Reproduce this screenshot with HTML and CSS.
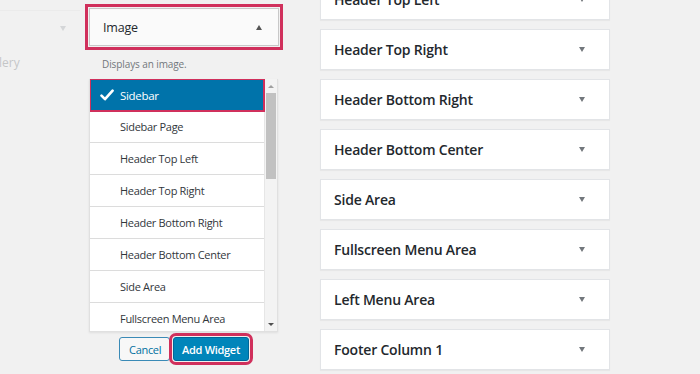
FILE: index.html
```html
<!DOCTYPE html>
<html lang="en">
<head>
    <meta charset="UTF-8">
    <meta name="viewport" content="width=device-width, initial-scale=1.0">
    <title>Widgets</title>
    <link rel="stylesheet" href="styles.css">
</head>
<body>
    <div class="screen">
        <!-- faded widget on the left -->
        <div class="ghost">
            <div class="ghost-title">
                <span class="arrow-down faint"></span>
            </div>
            <div class="ghost-desc">llery</div>
        </div>

        <!-- widget being added -->
        <div class="chooser">
            <div class="widget-top focus">
                <span>Image</span>
                <span class="arrow-up"></span>
            </div>
            <p class="widget-desc">Displays an image.</p>

            <div class="area-list">
                <ul class="areas">
                    <li class="area selected">
                        <svg class="check" width="14" height="14" viewBox="0 0 14 14">
                            <path d="M1.5 7.6 L5 11.2 L12.6 2.6" fill="none" stroke="#fff" stroke-width="2.6" stroke-linecap="round" stroke-linejoin="round"/>
                        </svg>
                        Sidebar
                    </li>
                    <li class="area">Sidebar Page</li>
                    <li class="area">Header Top Left</li>
                    <li class="area">Header Top Right</li>
                    <li class="area">Header Bottom Right</li>
                    <li class="area">Header Bottom Center</li>
                    <li class="area">Side Area</li>
                    <li class="area">Fullscreen Menu Area</li>
                </ul>
                <div class="scrollbar">
                    <span class="sb-up"></span>
                    <div class="sb-track"><div class="sb-thumb"></div></div>
                    <span class="sb-down"></span>
                </div>
            </div>

            <div class="actions">
                <button class="btn btn-cancel">Cancel</button>
                <button class="btn btn-primary focus">Add Widget</button>
            </div>
        </div>

        <!-- sidebars -->
        <div class="sidebars">
            <div class="sidebar-box"><h2>Header Top Left</h2><span class="arrow-down"></span></div>
            <div class="sidebar-box"><h2>Header Top Right</h2><span class="arrow-down"></span></div>
            <div class="sidebar-box"><h2>Header Bottom Right</h2><span class="arrow-down"></span></div>
            <div class="sidebar-box"><h2>Header Bottom Center</h2><span class="arrow-down"></span></div>
            <div class="sidebar-box"><h2>Side Area</h2><span class="arrow-down"></span></div>
            <div class="sidebar-box"><h2>Fullscreen Menu Area</h2><span class="arrow-down"></span></div>
            <div class="sidebar-box"><h2>Left Menu Area</h2><span class="arrow-down"></span></div>
            <div class="sidebar-box"><h2>Footer Column 1</h2><span class="arrow-down"></span></div>
        </div>
    </div>
</body>
</html>
```

FILE: styles.css
```css
:root {
    --bg: #f1f1f1;
    --border: #dcdcde;
    --text: #23282d;
    --muted: #72777c;
    --blue: #0073aa;
    --highlight: #d0305c;
}

* {
    box-sizing: border-box;
    margin: 0;
    padding: 0;
}

body {
    background: var(--bg);
    color: var(--text);
    font-family: 'Open Sans', 'Noto Sans', Arial, sans-serif;
    width: 700px;
    height: 374px;
    overflow: hidden;
}

.screen {
    display: flex;
    align-items: flex-start;
}

/* faded widget on the left edge */
.ghost {
    width: 80px;
    margin-top: 10px;
    opacity: 0.35;
}

.ghost-title {
    height: 36px;
    border-top: 1px solid #e2e2e2;
    display: flex;
    align-items: center;
    justify-content: flex-end;
    padding-right: 14px;
}

.ghost-desc {
    font-size: 12px;
    color: var(--muted);
    margin-top: 8px;
    margin-left: -4px;
}

/* chooser column */
.chooser {
    width: 190px;
    margin-left: 9px;
    margin-top: 8px;
}

.widget-top {
    height: 38px;
    background: #fafafa;
    border: 1px solid #c8c8c8;
    display: flex;
    align-items: center;
    justify-content: space-between;
    padding: 0 16px 0 13px;
    font-size: 12.5px;
    letter-spacing: -0.2px;
    color: var(--text);
}

.focus {
    outline: 3px solid var(--highlight);
    outline-offset: 1px;
}

.widget-desc {
    font-size: 10px;
    letter-spacing: -0.1px;
    color: var(--muted);
    padding: 11px 0 0 13px;
    height: 33px;
}

.area-list {
    display: flex;
    width: 189px;
    height: 253px;
    background: #fff;
    border: 1px solid #e0e0e0;
    border-top: none;
    box-shadow: 0 1px 2px rgba(0, 0, 0, 0.08);
    overflow: hidden;
}

.areas {
    list-style: none;
    flex: 1;
}

.area {
    height: 32px;
    border-bottom: 1px solid #dcdcdc;
    display: flex;
    align-items: center;
    padding-left: 30px;
    font-size: 11px;
    letter-spacing: -0.3px;
    color: #32373c;
}

.area.selected {
    background: var(--blue);
    color: #fff;
    padding-left: 10px;
    gap: 6px;
    border-bottom: none;
    outline: 2px solid var(--highlight);
    outline-offset: -1px;
    position: relative;
    font-size: 11.5px;
}

.scrollbar {
    width: 13px;
    background: #f3f3f3;
    border-left: 1px solid #e6e6e6;
    display: flex;
    flex-direction: column;
    align-items: center;
}

.sb-up,
.sb-down {
    height: 14px;
    display: flex;
    align-items: center;
}

.sb-up::before {
    content: '';
    border: 3px solid transparent;
    border-bottom: 3px solid #a0a0a0;
    border-top: none;
}

.sb-down::before {
    content: '';
    border: 3px solid transparent;
    border-top: 3px solid #505050;
    border-bottom: none;
}

.sb-track {
    flex: 1;
    width: 100%;
    padding: 0 1px;
}

.sb-thumb {
    height: 86px;
    background: #c1c1c1;
}

.actions {
    display: flex;
    gap: 3px;
    margin: 5px 0 0 30px;
}

.btn {
    font-family: inherit;
    font-size: 11px;
    letter-spacing: -0.3px;
    height: 24px;
    border-radius: 3px;
    padding: 0 9px;
    cursor: pointer;
}

.btn-cancel {
    width: 51px;
    background: #f7f7f7;
    border: 1px solid #3a8ab6;
    color: #0071a1;
}

.btn-primary {
    width: 76px;
    background: #0085ba;
    border: 1px solid #006799;
    color: #fff;
    font-weight: 600;
    padding: 0;
}

/* sidebar boxes */
.sidebars {
    width: 290px;
    margin-left: 41px;
    margin-top: -21px;
    display: flex;
    flex-direction: column;
    gap: 9px;
}

.sidebar-box {
    height: 41px;
    background: #fff;
    border: 1px solid #e2e4e7;
    box-shadow: 0 1px 1px rgba(0, 0, 0, 0.04);
    display: flex;
    align-items: center;
    justify-content: space-between;
    padding: 0 24px 0 13px;
}

.sidebar-box h2 {
    font-size: 14px;
    letter-spacing: -0.2px;
    font-weight: 600;
    color: var(--text);
}

.arrow-down {
    width: 0;
    height: 0;
    border-left: 3.5px solid transparent;
    border-right: 3.5px solid transparent;
    border-top: 5px solid #72777c;
}

.arrow-down.faint {
    border-top-color: #a0a5aa;
}

.arrow-up {
    width: 0;
    height: 0;
    border-left: 3.5px solid transparent;
    border-right: 3.5px solid transparent;
    border-bottom: 5px solid #555;
}
```
